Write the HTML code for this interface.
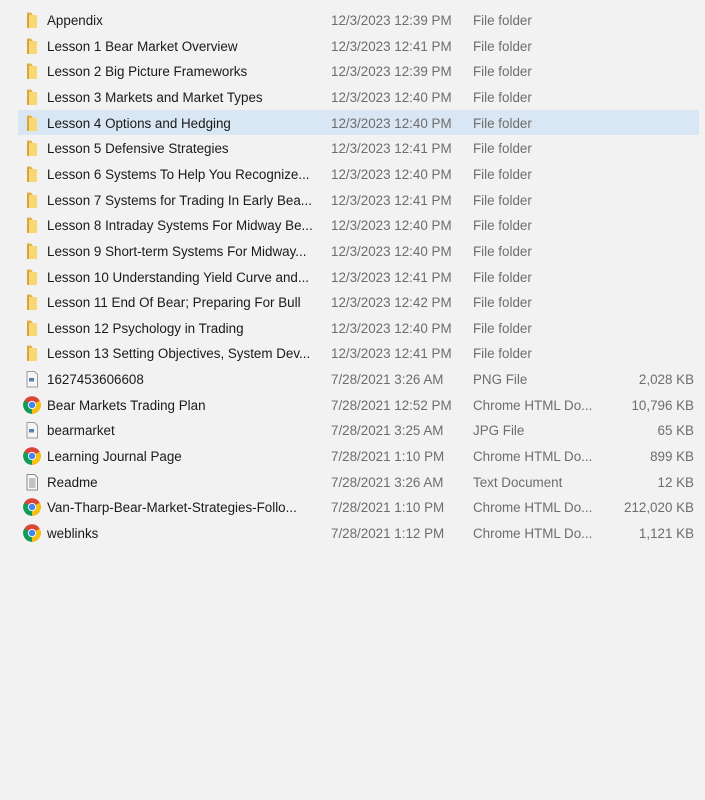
<!DOCTYPE html>
<html><head><meta charset="utf-8"><style>
body{margin:0;width:705px;height:800px;background:#f2f2f2;font-family:"Liberation Sans",sans-serif;font-size:13.4px;position:relative;overflow:hidden}
.r{position:absolute;left:18px;width:681px;height:25.65px;line-height:27px;white-space:nowrap}
.sel{background:#d9e6f3}
.n{position:absolute;left:29px;color:#1a1a1a}
.d{position:absolute;left:313px;color:#6d6d6d}
.t{position:absolute;left:455px;color:#6d6d6d}
.s{position:absolute;right:5px;color:#6d6d6d}
.ic{position:absolute;left:5px;top:4px;width:18px;height:18px}
</style></head><body>
<svg width="0" height="0" style="position:absolute">
<defs>
<symbol id="fo" viewBox="0 0 18 18"><path d="M4 1.5h4l1.5 2V17H4z" fill="#e2b24a"/><path d="M6 4h8v13H6z" fill="#f8d775"/><path d="M4 1.5V17h2V4z" fill="#d8a538"/></symbol>
<symbol id="ch" viewBox="0 0 16 16"><circle cx="8" cy="8" r="7.8" fill="#db4437"/><path d="M8 8L1.2 11.9A7.8 7.8 0 0 1 1.2 4.1z M8 8L1.2 11.9A7.8 7.8 0 0 0 8 15.8z" fill="#0f9d58"/><path d="M8 8L8 15.8A7.8 7.8 0 0 0 14.8 4.1z" fill="#f4c20d"/><circle cx="8" cy="8" r="3.7" fill="#fff"/><circle cx="8" cy="8" r="2.9" fill="#4285f4"/></symbol>
<symbol id="im" viewBox="0 0 18 18"><path d="M4 1.5h7.5l3 3V17H4z" fill="#f5f5f5" stroke="#9a9a9a"/><rect x="6" y="8" width="5" height="3.5" fill="#5a7fb5"/></symbol>
<symbol id="tx" viewBox="0 0 18 18"><path d="M4 1.5h7.5l3 3V17H4z" fill="#f8f8f8" stroke="#8a8a8a"/><path d="M6 6h6.5M6 8h6.5M6 10h6.5M6 12h6.5M6 14h6.5" stroke="#8a8a8a"/></symbol>
</defs></svg>
<div class="r" style="top:7px"><svg class="ic"><use href="#fo"/></svg><span class="n">Appendix</span><span class="d">12/3/2023 12:39 PM</span><span class="t">File folder</span></div>
<div class="r" style="top:32.65px"><svg class="ic"><use href="#fo"/></svg><span class="n">Lesson 1 Bear Market Overview</span><span class="d">12/3/2023 12:41 PM</span><span class="t">File folder</span></div>
<div class="r" style="top:58.3px"><svg class="ic"><use href="#fo"/></svg><span class="n">Lesson 2 Big Picture Frameworks</span><span class="d">12/3/2023 12:39 PM</span><span class="t">File folder</span></div>
<div class="r" style="top:83.95px"><svg class="ic"><use href="#fo"/></svg><span class="n">Lesson 3 Markets and Market Types</span><span class="d">12/3/2023 12:40 PM</span><span class="t">File folder</span></div>
<div class="r sel" style="top:109.6px"><svg class="ic"><use href="#fo"/></svg><span class="n">Lesson 4 Options and Hedging</span><span class="d">12/3/2023 12:40 PM</span><span class="t">File folder</span></div>
<div class="r" style="top:135.25px"><svg class="ic"><use href="#fo"/></svg><span class="n">Lesson 5 Defensive Strategies</span><span class="d">12/3/2023 12:41 PM</span><span class="t">File folder</span></div>
<div class="r" style="top:160.9px"><svg class="ic"><use href="#fo"/></svg><span class="n">Lesson 6 Systems To Help You Recognize...</span><span class="d">12/3/2023 12:40 PM</span><span class="t">File folder</span></div>
<div class="r" style="top:186.55px"><svg class="ic"><use href="#fo"/></svg><span class="n">Lesson 7 Systems for Trading In Early Bea...</span><span class="d">12/3/2023 12:41 PM</span><span class="t">File folder</span></div>
<div class="r" style="top:212.2px"><svg class="ic"><use href="#fo"/></svg><span class="n">Lesson 8 Intraday Systems For Midway Be...</span><span class="d">12/3/2023 12:40 PM</span><span class="t">File folder</span></div>
<div class="r" style="top:237.85px"><svg class="ic"><use href="#fo"/></svg><span class="n">Lesson 9 Short-term Systems For Midway...</span><span class="d">12/3/2023 12:40 PM</span><span class="t">File folder</span></div>
<div class="r" style="top:263.5px"><svg class="ic"><use href="#fo"/></svg><span class="n">Lesson 10 Understanding Yield Curve and...</span><span class="d">12/3/2023 12:41 PM</span><span class="t">File folder</span></div>
<div class="r" style="top:289.15px"><svg class="ic"><use href="#fo"/></svg><span class="n">Lesson 11 End Of Bear; Preparing For Bull</span><span class="d">12/3/2023 12:42 PM</span><span class="t">File folder</span></div>
<div class="r" style="top:314.8px"><svg class="ic"><use href="#fo"/></svg><span class="n">Lesson 12 Psychology in Trading</span><span class="d">12/3/2023 12:40 PM</span><span class="t">File folder</span></div>
<div class="r" style="top:340.45px"><svg class="ic"><use href="#fo"/></svg><span class="n">Lesson 13 Setting Objectives, System Dev...</span><span class="d">12/3/2023 12:41 PM</span><span class="t">File folder</span></div>
<div class="r" style="top:366.1px"><svg class="ic"><use href="#im"/></svg><span class="n">1627453606608</span><span class="d">7/28/2021 3:26 AM</span><span class="t">PNG File</span><span class="s">2,028 KB</span></div>
<div class="r" style="top:391.75px"><svg class="ic"><use href="#ch"/></svg><span class="n">Bear Markets Trading Plan</span><span class="d">7/28/2021 12:52 PM</span><span class="t">Chrome HTML Do...</span><span class="s">10,796 KB</span></div>
<div class="r" style="top:417.4px"><svg class="ic"><use href="#im"/></svg><span class="n">bearmarket</span><span class="d">7/28/2021 3:25 AM</span><span class="t">JPG File</span><span class="s">65 KB</span></div>
<div class="r" style="top:443.05px"><svg class="ic"><use href="#ch"/></svg><span class="n">Learning Journal Page</span><span class="d">7/28/2021 1:10 PM</span><span class="t">Chrome HTML Do...</span><span class="s">899 KB</span></div>
<div class="r" style="top:468.7px"><svg class="ic"><use href="#tx"/></svg><span class="n">Readme</span><span class="d">7/28/2021 3:26 AM</span><span class="t">Text Document</span><span class="s">12 KB</span></div>
<div class="r" style="top:494.35px"><svg class="ic"><use href="#ch"/></svg><span class="n">Van-Tharp-Bear-Market-Strategies-Follo...</span><span class="d">7/28/2021 1:10 PM</span><span class="t">Chrome HTML Do...</span><span class="s">212,020 KB</span></div>
<div class="r" style="top:520px"><svg class="ic"><use href="#ch"/></svg><span class="n">weblinks</span><span class="d">7/28/2021 1:12 PM</span><span class="t">Chrome HTML Do...</span><span class="s">1,121 KB</span></div>
</body></html>
